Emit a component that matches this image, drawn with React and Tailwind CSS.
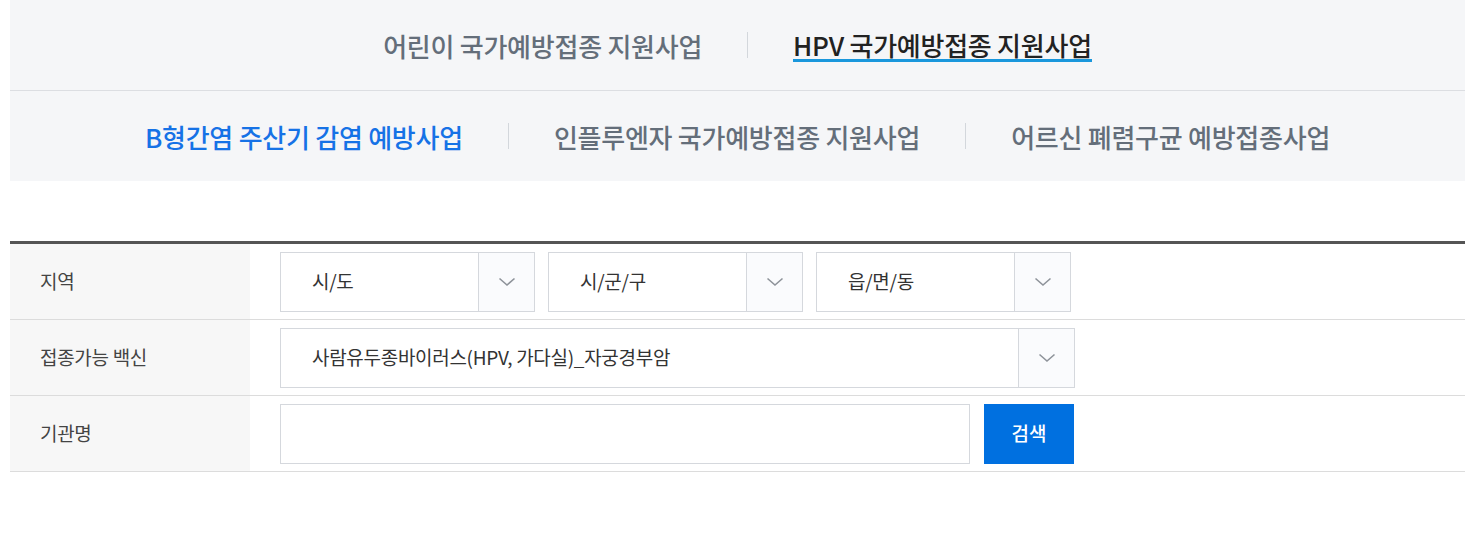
import React from "react";

const Chevron = () => (
  <svg width="18" height="10" viewBox="0 0 18 10" fill="none">
    <path d="M1.5 1.5 L9 8 L16.5 1.5" stroke="#8e939a" strokeWidth="1.6" />
  </svg>
);

function Select({ label, width }) {
  return (
    <div
      className={`flex h-[60px] ${width} border border-[#d5d8dd] bg-white`}
    >
      <div className="flex flex-1 items-center pl-[31px] text-[19px] tracking-[-0.3px] text-[#333]">
        {label}
      </div>
      <div className="flex w-[56px] items-center justify-center border-l border-[#d5d8dd] bg-[#fafbfd]">
        <Chevron />
      </div>
    </div>
  );
}

function Row({ label, children }) {
  return (
    <div className="flex h-[76px] border-b border-[#dcdcdc]">
      <div className="flex w-[240px] items-center bg-[#f7f7f7] pl-[30px] text-[19px] tracking-[-0.3px] text-[#444]">
        {label}
      </div>
      <div className="flex flex-1 items-center pl-[30px]">{children}</div>
    </div>
  );
}

const Sep = () => <span className="mx-[45px] h-[26px] w-px bg-[#d3d7dc]" />;

export default function App() {
  return (
    <div className="min-h-[533px] bg-white font-['Noto_Sans_CJK_KR','Noto_Sans',sans-serif]">
      <div className="ml-[10px] w-[1455px]">
        <div className="bg-[#f5f6f8]">
          <div className="flex h-[91px] items-center justify-center border-b border-[#dcdee2] text-[26px] font-medium tracking-[-0.25px]">
            <span className="text-[#646e7a]">어린이 국가예방접종 지원사업</span>
            <Sep />
            <span className="mt-[2px] border-b-[3px] border-[#1a97dc] leading-[28px] text-[#222]">
              HPV 국가예방접종 지원사업
            </span>
          </div>
          <div className="flex h-[90px] items-center justify-center text-[26px] font-medium tracking-[-0.25px]">
            <span className="text-[#1672e6]">B형간염 주산기 감염 예방사업</span>
            <Sep />
            <span className="text-[#646e7a]">인플루엔자 국가예방접종 지원사업</span>
            <Sep />
            <span className="text-[#646e7a]">어르신 폐렴구균 예방접종사업</span>
          </div>
        </div>

        <div className="mt-[60px] border-t-[3px] border-[#555]">
          <Row label="지역">
            <div className="flex gap-[13px]">
              <Select label="시/도" width="w-[255px]" />
              <Select label="시/군/구" width="w-[255px]" />
              <Select label="읍/면/동" width="w-[255px]" />
            </div>
          </Row>
          <Row label="접종가능 백신">
            <Select
              label="사람유두종바이러스(HPV, 가다실)_자궁경부암"
              width="w-[795px]"
            />
          </Row>
          <Row label="기관명">
            <div className="flex gap-[14px]">
              <input
                className="h-[60px] w-[690px] border border-[#d5d8dd] bg-white outline-none"
                type="text"
              />
              <button className="h-[60px] w-[90px] bg-[#0070e0] text-[19px] font-medium text-white">
                검색
              </button>
            </div>
          </Row>
        </div>
      </div>
    </div>
  );
}
